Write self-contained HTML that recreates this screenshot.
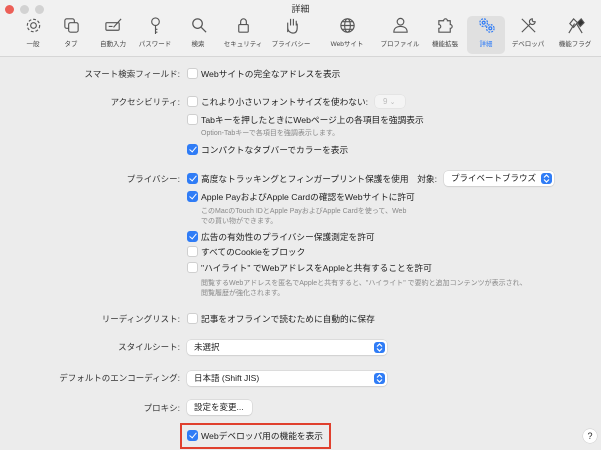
<!DOCTYPE html>
<html><head><meta charset="utf-8"><style>
*{margin:0;padding:0;box-sizing:border-box}
body{width:601px;height:450px;background:#ececec;font-family:"Liberation Sans","Noto Sans CJK JP",sans-serif;color:#222;position:relative;overflow:hidden}
.tb{position:absolute;left:0;top:0;width:601px;height:57px;background:#f1f1f1;border-bottom:1px solid #d6d6d6}
.dot{position:absolute;top:5px;width:9px;height:9px;border-radius:50%}
.title{position:absolute;top:2px;left:0;width:601px;text-align:center;font-size:9px;color:#333}
.it{position:absolute;top:16px;width:44px;margin-left:-22px;text-align:center;font-size:6.5px;color:#444}
.it svg{display:block;margin:0 auto 3px;width:19px;height:19px}
.sel{background:#e0e0e0;border-radius:5px;height:38px;top:16px;width:38px;margin-left:-19px}
.t{position:absolute;font-size:8.7px;white-space:nowrap;line-height:12px}
.lb{position:absolute;right:421px;font-size:8.5px;white-space:nowrap;line-height:12px;color:#333}
.s{position:absolute;left:201px;font-size:7px;color:#888;white-space:nowrap;line-height:10px}
.cb{position:absolute;left:187px;width:11px;height:11px;border-radius:3px;background:#fff;border:1px solid #cfcfcf;margin-top:-1px}
.cb.on{background:#2f7cf6;border-color:#2f7cf6}
.cb.on::after{content:"";position:absolute;left:3px;top:0px;width:3px;height:6px;border:solid #fff;border-width:0 1.6px 1.6px 0;transform:rotate(40deg)}
.pop{position:absolute;height:15px;background:#fff;border-radius:4px;box-shadow:0 0 0 .5px #ccc,0 1px 1px rgba(0,0,0,.1);font-size:8.5px;line-height:15px;padding-left:7px;white-space:nowrap}
.pop i{position:absolute;right:2px;top:2px;width:11px;height:11px;background:#2f7cf6;border-radius:3px}
.pop i svg{position:absolute;left:2px;top:1px}
</style></head><body>
<div class="tb">
<div class="dot" style="left:5px;background:#ec5f57"></div>
<div class="dot" style="left:20px;background:#d2d2d2"></div>
<div class="dot" style="left:35px;background:#d2d2d2"></div>
<div class="title">詳細</div>
<div class="it sel" style="left:486px"></div>
<div class="it" style="left:33px"><svg viewBox="0 0 20 20" fill="none" stroke="#555" stroke-width="1.2"><circle cx="10" cy="10" r="3"/><circle cx="10" cy="10" r="6.5" stroke-dasharray="3 2"/></svg>一般</div>
<div class="it" style="left:71px"><svg viewBox="0 0 20 20" fill="none" stroke="#555" stroke-width="1.2"><rect x="3" y="3" width="10" height="10" rx="2"/><rect x="7" y="7" width="10" height="10" rx="2" fill="#f1f1f1"/></svg>タブ</div>
<div class="it" style="left:113px"><svg viewBox="0 0 20 20" fill="none" stroke="#555" stroke-width="1.2"><rect x="2" y="7" width="14" height="8" rx="1"/><path d="M10 12L18 3M5 11h4"/></svg>自動入力</div>
<div class="it" style="left:155px"><svg viewBox="0 0 20 20" fill="none" stroke="#555" stroke-width="1.2"><circle cx="10" cy="6" r="4"/><path d="M10 10v9M10 14h2M10 17h2"/></svg>パスワード</div>
<div class="it" style="left:198px"><svg viewBox="0 0 20 20" fill="none" stroke="#555" stroke-width="1.3"><circle cx="9" cy="8" r="5"/><path d="M13 12l5 5"/></svg>検索</div>
<div class="it" style="left:243px"><svg viewBox="0 0 20 20" fill="none" stroke="#555" stroke-width="1.2"><rect x="5" y="9" width="10" height="8" rx="1"/><path d="M7 9V6a3 3 0 016 0v3"/></svg>セキュリティ</div>
<div class="it" style="left:291px"><svg viewBox="0 0 20 20" fill="none" stroke="#555" stroke-width="1.2"><path d="M6 17V7M9 10V3M12 10V3M15 10V5M6 12c0 4 3 6 6 6s4-3 4-6V8"/></svg>プライバシー</div>
<div class="it" style="left:347px"><svg viewBox="0 0 20 20" fill="none" stroke="#555" stroke-width="1.2"><circle cx="10" cy="10" r="7"/><ellipse cx="10" cy="10" rx="3" ry="7"/><path d="M3 10h14M4 6h12M4 14h12"/></svg>Webサイト</div>
<div class="it" style="left:400px"><svg viewBox="0 0 20 20" fill="none" stroke="#555" stroke-width="1.2"><circle cx="10" cy="6" r="3.5"/><path d="M3 17c0-4 3-6 7-6s7 2 7 6z"/></svg>プロファイル</div>
<div class="it" style="left:445px"><svg viewBox="0 0 20 20" fill="none" stroke="#555" stroke-width="1.2"><path d="M3 5h5a2 2 0 014 0h3v4a2 2 0 010 4v4H3v-4a2 2 0 000-4z"/></svg>機能拡張</div>
<div class="it" style="left:486px;color:#2f7cf6"><svg viewBox="0 0 20 20" fill="none" stroke="#2f7cf6" stroke-width="1.3"><circle cx="7" cy="7" r="4" stroke-dasharray="2 1.2"/><circle cx="7" cy="7" r="1.5"/><circle cx="14" cy="13" r="4" stroke-dasharray="2 1.2"/><circle cx="14" cy="13" r="1.5"/></svg>詳細</div>
<div class="it" style="left:528px"><svg viewBox="0 0 20 20" fill="none" stroke="#555" stroke-width="1.2"><path d="M3 3l14 14M3 17L12 8M14 3a3 3 0 103 3l-2 0-1-1z"/></svg>デベロッパ</div>
<div class="it" style="left:575px"><svg viewBox="0 0 20 20" fill="none" stroke="#555" stroke-width="1.2"><path d="M3 18L9 8M17 18L11 8M4 8l4-5 4 4-4 5z"/><path d="M12 7l4-4 3 4-4 4z" fill="#333"/></svg>機能フラグ</div>
</div>

<div class="lb" style="top:68px">スマート検索フィールド:</div>
<div class="cb" style="top:69px"></div><div class="t" style="left:201px;top:68px">Webサイトの完全なアドレスを表示</div>

<div class="lb" style="top:96px">アクセシビリティ:</div>
<div class="cb" style="top:97px"></div><div class="t" style="left:201px;top:96px">これより小さいフォントサイズを使わない:</div>
<div style="position:absolute;left:375px;top:95px;width:30px;height:13px;background:#f4f4f4;border-radius:4px;box-shadow:0 0 0 .5px #ddd;font-size:8px;color:#bbb;line-height:13px;padding-left:8px">9 <span style="font-size:7px">⌄</span></div>
<div class="cb" style="top:115px"></div><div class="t" style="left:201px;top:114px">Tabキーを押したときにWebページ上の各項目を強調表示</div>
<div class="s" style="top:129px">Option-Tabキーで各項目を強調表示します。</div>
<div class="cb on" style="top:145px"></div><div class="t" style="left:201px;top:144px">コンパクトなタブバーでカラーを表示</div>

<div class="lb" style="top:173px">プライバシー:</div>
<div class="cb on" style="top:174px"></div><div class="t" style="left:201px;top:173px">高度なトラッキングとフィンガープリント保護を使用　対象:</div>
<div class="pop" style="left:444px;top:171px;width:110px">プライベートブラウズ<i><svg width="7" height="9" viewBox="0 0 7 9" fill="none" stroke="#fff" stroke-width="1.2"><path d="M1 3.5l2.5-2.5 2.5 2.5M1 5.5l2.5 2.5 2.5-2.5"/></svg></i></div>
<div class="cb on" style="top:192px"></div><div class="t" style="left:201px;top:191px">Apple PayおよびApple Cardの確認をWebサイトに許可</div>
<div class="s" style="top:207px">このMacのTouch IDとApple PayおよびApple Cardを使って、Web<br>での買い物ができます。</div>
<div class="cb on" style="top:232px"></div><div class="t" style="left:201px;top:231px">広告の有効性のプライバシー保護測定を許可</div>
<div class="cb" style="top:247px"></div><div class="t" style="left:201px;top:246px">すべてのCookieをブロック</div>
<div class="cb" style="top:263px"></div><div class="t" style="left:201px;top:262px">"ハイライト" でWebアドレスをAppleと共有することを許可</div>
<div class="s" style="top:279px">閲覧するWebアドレスを匿名でAppleと共有すると、"ハイライト" で要約と追加コンテンツが表示され、<br>閲覧履歴が強化されます。</div>

<div class="lb" style="top:313px">リーディングリスト:</div>
<div class="cb" style="top:314px"></div><div class="t" style="left:201px;top:313px">記事をオフラインで読むために自動的に保存</div>

<div class="lb" style="top:341px">スタイルシート:</div>
<div class="pop" style="left:187px;top:340px;width:200px">未選択<i><svg width="7" height="9" viewBox="0 0 7 9" fill="none" stroke="#fff" stroke-width="1.2"><path d="M1 3.5l2.5-2.5 2.5 2.5M1 5.5l2.5 2.5 2.5-2.5"/></svg></i></div>
<div class="lb" style="top:372px">デフォルトのエンコーディング:</div>
<div class="pop" style="left:187px;top:371px;width:200px">日本語 (Shift JIS)<i><svg width="7" height="9" viewBox="0 0 7 9" fill="none" stroke="#fff" stroke-width="1.2"><path d="M1 3.5l2.5-2.5 2.5 2.5M1 5.5l2.5 2.5 2.5-2.5"/></svg></i></div>
<div class="lb" style="top:402px">プロキシ:</div>
<div class="pop" style="left:187px;top:400px;width:65px;padding-left:7px">設定を変更...</div>

<div style="position:absolute;left:180px;top:423px;width:151px;height:26px;border:2px solid #e0402e"></div>
<div class="cb on" style="top:431px"></div><div class="t" style="left:201px;top:430px">Webデベロッパ用の機能を表示</div>
<div style="position:absolute;left:583px;top:429px;width:14px;height:14px;border-radius:50%;background:#fff;box-shadow:0 0 0 .5px #ccc;font-size:9px;text-align:center;line-height:14px">?</div>
</body></html>
